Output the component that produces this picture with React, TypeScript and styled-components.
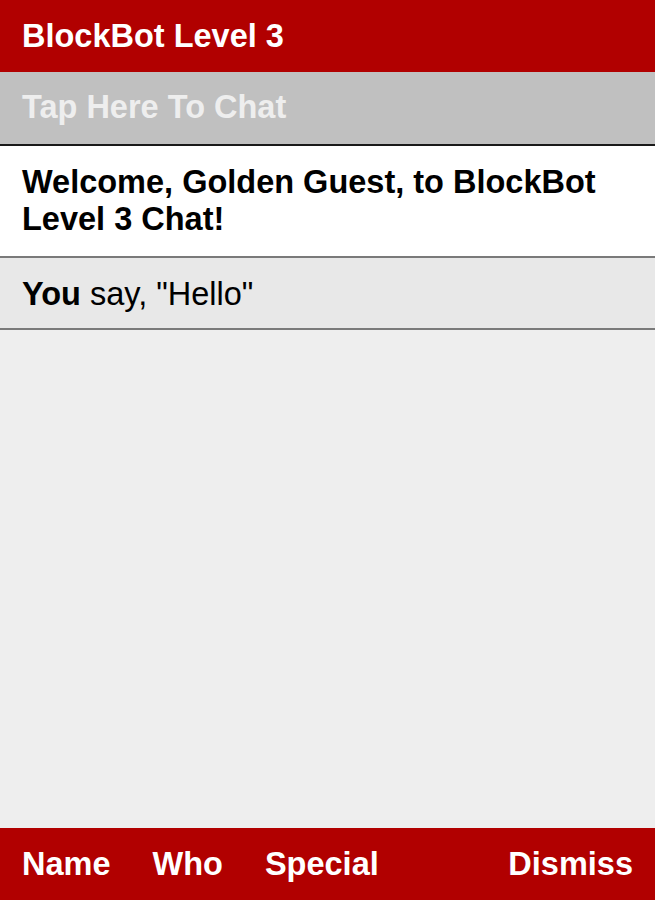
import styled, { createGlobalStyle } from "styled-components";

const GlobalStyle = createGlobalStyle`
  html, body {
    margin: 0;
    padding: 0;
    height: 100%;
  }
  body {
    font-family: "Liberation Sans", Arial, sans-serif;
    background: #eeeeee;
  }
  #root {
    height: 100%;
  }
`;

const App = () => {
  const messages = [
    { id: 1, kind: "welcome", text: "Welcome, Golden Guest, to BlockBot Level 3 Chat!" },
    { id: 2, kind: "say", who: "You", text: 'say, "Hello"' },
  ];

  return (
    <>
      <GlobalStyle />
      <Page>
        <Header>BlockBot Level 3</Header>
        <ChatInput>Tap Here To Chat</ChatInput>
        <Log>
          {messages.map((m) =>
            m.kind === "welcome" ? (
              <Welcome key={m.id}>{m.text}</Welcome>
            ) : (
              <Message key={m.id}>
                <b>{m.who}</b> {m.text}
              </Message>
            )
          )}
        </Log>
        <Footer>
          <FooterButton>Name</FooterButton>
          <FooterButton>Who</FooterButton>
          <FooterButton>Special</FooterButton>
          <Spacer />
          <FooterButton>Dismiss</FooterButton>
        </Footer>
      </Page>
    </>
  );
};

export default App;

const Page = styled.div`
  height: 900px;
  display: flex;
  flex-direction: column;
  background: #eeeeee;
  font-size: 32.5px;
  line-height: 36px;
`;

const Header = styled.div`
  height: 72px;
  background: #b10000;
  color: #ffffff;
  font-weight: bold;
  padding: 18px 22px 0;
  box-sizing: border-box;
`;

const ChatInput = styled.div`
  height: 74px;
  background: #c0c0c0;
  color: #eeeeee;
  font-weight: bold;
  padding: 17px 22px 0;
  box-sizing: border-box;
  border-bottom: 2px solid #1a1a1a;
`;

const Log = styled.div`
  flex: 1;
  display: flex;
  flex-direction: column;
`;

const Welcome = styled.div`
  background: #ffffff;
  color: #000000;
  font-weight: bold;
  line-height: 37px;
  padding: 18px 22px 18px;
  border-bottom: 2px solid #7a7a7a;
`;

const Message = styled.div`
  background: #e8e8e8;
  color: #000000;
  padding: 18px 22px 16px;
  border-bottom: 2px solid #7a7a7a;

  b {
    font-weight: bold;
  }
`;

const Footer = styled.div`
  height: 72px;
  background: #b10000;
  display: flex;
  align-items: flex-start;
  gap: 42px;
  padding: 18px 22px 0;
  box-sizing: border-box;
`;

const FooterButton = styled.div`
  color: #ffffff;
  font-weight: bold;
`;

const Spacer = styled.div`
  flex: 1;
`;
